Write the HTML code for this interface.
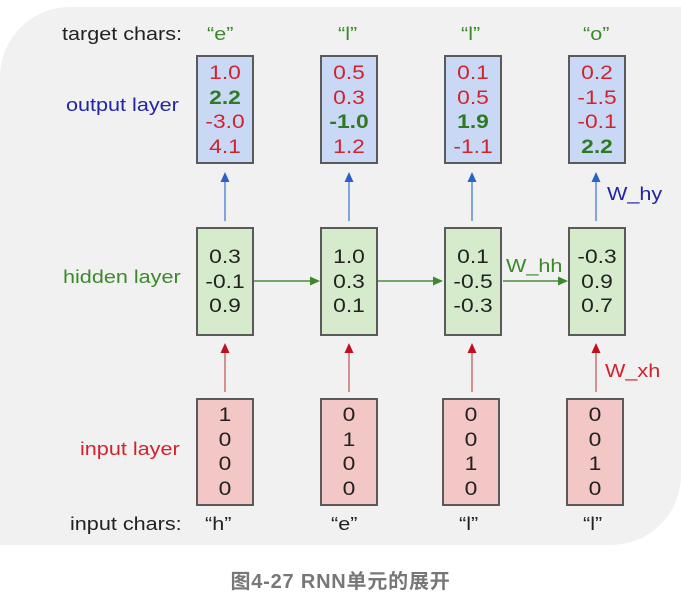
<!DOCTYPE html>
<html><head><meta charset="utf-8"><style>
body{margin:0;width:681px;height:601px;background:#fff;position:relative;overflow:hidden;font-family:"Liberation Sans",Arial,sans-serif}
#panel{position:absolute;left:0;top:7px;width:681px;height:538px;background:#f1f1f1;border-radius:70px 0 70px 0}
.t{position:absolute;font-size:18px;white-space:nowrap;transform:scaleX(1.2);transform-origin:left center}
.box{position:absolute;width:58px;border:2px solid #5a5a5a;box-sizing:border-box;text-align:center;font-size:19px;line-height:24.5px}
.box div{transform:scaleX(1.2)}
.o{top:55px;height:109px;background:#c9d8f4;padding-top:5px}
.h{top:227px;height:109px;background:#d6ebcc;padding-top:17px;color:#222}
.i{top:398px;height:108px;background:#f4c7c7;padding-top:4px;color:#222}
.r{color:#d2222e}.g{color:#2e7a22;font-weight:bold}
</style></head><body>
<div id="panel"></div>
<svg width="681" height="601" style="position:absolute;left:0;top:0">
<defs>
<marker id="mb" markerWidth="10" markerHeight="9" refX="4" refY="4.5" orient="auto" markerUnits="userSpaceOnUse"><path d="M0,0L10,4.5L0,9z" fill="#2a62c9"/></marker>
<marker id="mr" markerWidth="10" markerHeight="9" refX="4" refY="4.5" orient="auto" markerUnits="userSpaceOnUse"><path d="M0,0L10,4.5L0,9z" fill="#c01020"/></marker>
<marker id="mg" markerWidth="10" markerHeight="9" refX="8" refY="4.5" orient="auto" markerUnits="userSpaceOnUse"><path d="M0,0L10,4.5L0,9z" fill="#3c8a2c"/></marker>
</defs>
<g stroke="#5b8ad6" stroke-width="1.5" marker-end="url(#mb)">
<line x1="225" y1="221" x2="225" y2="178"/><line x1="349" y1="221" x2="349" y2="178"/><line x1="472" y1="221" x2="472" y2="178"/><line x1="596" y1="221" x2="596" y2="178"/></g>
<g stroke="#c87070" stroke-width="1.5" marker-end="url(#mr)">
<line x1="225" y1="392" x2="225" y2="349"/><line x1="349" y1="392" x2="349" y2="349"/><line x1="472" y1="392" x2="472" y2="349"/><line x1="596" y1="392" x2="596" y2="349"/></g>
<g stroke="#4a8a3a" stroke-width="1.5" marker-end="url(#mg)">
<line x1="254" y1="281" x2="318" y2="281"/><line x1="378" y1="281" x2="441" y2="281"/><line x1="503" y1="281" x2="566" y2="281"/></g>
</svg>
<div class="t" style="left:62px;top:24px;color:#222">target chars:</div>
<div class="t" style="left:207px;top:24px;color:#3a8a2a">“e”</div>
<div class="t" style="left:338px;top:24px;color:#3a8a2a">“l”</div>
<div class="t" style="left:461px;top:24px;color:#3a8a2a">“l”</div>
<div class="t" style="left:583px;top:24px;color:#3a8a2a">“o”</div>
<div class="t" style="left:66px;top:95px;color:#2424a8">output layer</div>
<div class="t" style="left:63px;top:267px;color:#3a8a2a">hidden layer</div>
<div class="t" style="left:80px;top:439px;color:#d2222e">input layer</div>
<div class="t" style="left:70px;top:514px;color:#222">input chars:</div>
<div class="t" style="left:205px;top:514px;color:#222">“h”</div>
<div class="t" style="left:331px;top:514px;color:#222">“e”</div>
<div class="t" style="left:459px;top:514px;color:#222">“l”</div>
<div class="t" style="left:583px;top:514px;color:#222">“l”</div>
<div class="t" style="left:607px;top:184px;color:#2424a8">W_hy</div>
<div class="t" style="left:506px;top:256px;color:#3a8a2a">W_hh</div>
<div class="t" style="left:605px;top:361px;color:#d2222e">W_xh</div>

<div class="box o" style="left:196px"><div class="r">1.0</div><div class="g">2.2</div><div class="r">-3.0</div><div class="r">4.1</div></div>
<div class="box o" style="left:320px"><div class="r">0.5</div><div class="r">0.3</div><div class="g">-1.0</div><div class="r">1.2</div></div>
<div class="box o" style="left:444px"><div class="r">0.1</div><div class="r">0.5</div><div class="g">1.9</div><div class="r">-1.1</div></div>
<div class="box o" style="left:568px"><div class="r">0.2</div><div class="r">-1.5</div><div class="r">-0.1</div><div class="g">2.2</div></div>

<div class="box h" style="left:196px"><div>0.3</div><div>-0.1</div><div>0.9</div></div>
<div class="box h" style="left:320px"><div>1.0</div><div>0.3</div><div>0.1</div></div>
<div class="box h" style="left:444px"><div>0.1</div><div>-0.5</div><div>-0.3</div></div>
<div class="box h" style="left:568px"><div>-0.3</div><div>0.9</div><div>0.7</div></div>

<div class="box i" style="left:196px"><div>1</div><div>0</div><div>0</div><div>0</div></div>
<div class="box i" style="left:320px"><div>0</div><div>1</div><div>0</div><div>0</div></div>
<div class="box i" style="left:442px"><div>0</div><div>0</div><div>1</div><div>0</div></div>
<div class="box i" style="left:566px"><div>0</div><div>0</div><div>1</div><div>0</div></div>

<div style="position:absolute;left:0;width:681px;text-align:center;top:565px;color:#777;font-weight:bold;font-size:20px;letter-spacing:0.8px;font-family:'Liberation Sans','Noto Sans CJK SC',sans-serif">图4-27 RNN单元的展开</div>
</body></html>
